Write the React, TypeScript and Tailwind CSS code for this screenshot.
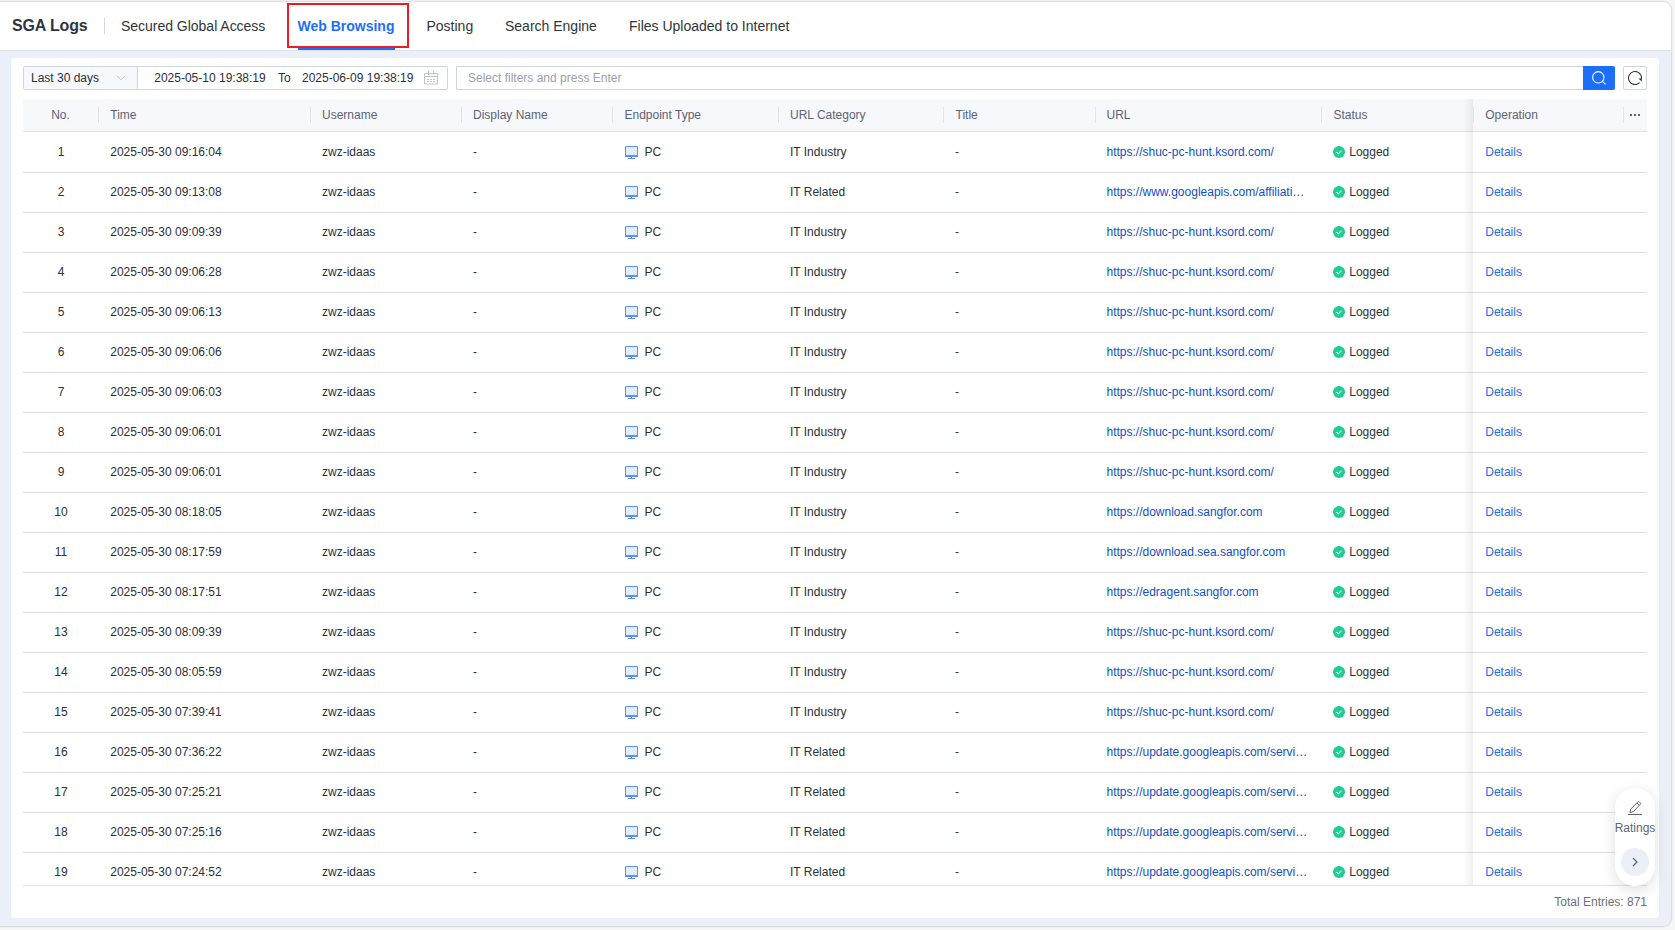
import React from "react";

type Log = { time: string; category: string; url: string };

const HUNT = "https://shuc-pc-hunt.ksord.com/";
const UPDATE = "https://update.googleapis.com/servi…";

const logs: Log[] = [
  { time: "09:16:04", category: "IT Industry", url: HUNT },
  { time: "09:13:08", category: "IT Related", url: "https://www.googleapis.com/affiliati…" },
  { time: "09:09:39", category: "IT Industry", url: HUNT },
  { time: "09:06:28", category: "IT Industry", url: HUNT },
  { time: "09:06:13", category: "IT Industry", url: HUNT },
  { time: "09:06:06", category: "IT Industry", url: HUNT },
  { time: "09:06:03", category: "IT Industry", url: HUNT },
  { time: "09:06:01", category: "IT Industry", url: HUNT },
  { time: "09:06:01", category: "IT Industry", url: HUNT },
  { time: "08:18:05", category: "IT Industry", url: "https://download.sangfor.com" },
  { time: "08:17:59", category: "IT Industry", url: "https://download.sea.sangfor.com" },
  { time: "08:17:51", category: "IT Industry", url: "https://edragent.sangfor.com" },
  { time: "08:09:39", category: "IT Industry", url: HUNT },
  { time: "08:05:59", category: "IT Industry", url: HUNT },
  { time: "07:39:41", category: "IT Industry", url: HUNT },
  { time: "07:36:22", category: "IT Related", url: UPDATE },
  { time: "07:25:21", category: "IT Related", url: UPDATE },
  { time: "07:25:16", category: "IT Related", url: UPDATE },
  { time: "07:24:52", category: "IT Related", url: UPDATE },
];

const headers = [
  { name: "Time", pad: "pl-[11.25px]" },
  { name: "Username", pad: "pl-[11px]" },
  { name: "Display Name", pad: "pl-[11px]" },
  { name: "Endpoint Type", pad: "pl-[11.5px]" },
  { name: "URL Category", pad: "pl-[11px]" },
  { name: "Title", pad: "pl-[11.5px]" },
  { name: "URL", pad: "pl-[10.5px]" },
  { name: "Status", pad: "pl-[11.5px]" },
  { name: "Operation", pad: "pl-[11.25px]" },
];

const columns =
  "grid grid-cols-[76px_212px_151px_151px_166px_165px_152px_226px_152px_150px_23px] items-center";

function MonitorIcon() {
  return (
    <svg width="13" height="13" viewBox="0 0 13 13" className="mt-px shrink-0">
      <rect x="0.5" y="0.5" width="12" height="10" rx="0.5" fill="#e6edff" stroke="#5b8ff9" />
      <path d="M0 9h13v2H0zM6 11h1v1H6zM3 12h7v1H3z" fill="#5b8ff9" />
    </svg>
  );
}

function CheckIcon() {
  return (
    <svg width="12" height="12" viewBox="0 0 12 12" className="shrink-0">
      <circle cx="6" cy="6" r="6" fill="#1fcc94" />
      <path d="M3.5 6.1 5.3 7.8 8.5 4.6" fill="none" stroke="#fff" strokeWidth="1.1" />
    </svg>
  );
}

function CalendarIcon() {
  return (
    <svg width="14" height="14" viewBox="0 0 14 14" fill="none" stroke="#c0c4cc">
      <path d="M0.5 2.5h13v10.5h-13zM0.5 5.5h13M4.5 0v4M9.5 0v4" />
      <path d="M3 8.5h2M6 8.5h2M9 8.5h2M3 10.5h2M6 10.5h2M9 10.5h2" />
    </svg>
  );
}

function TabBar() {
  return (
    <header className="flex h-[49px] shrink-0 items-center border-b border-[#dfe1e8] bg-white pl-3 text-sm text-[#2f3540]">
      <h1 className="w-[92px] text-base font-bold tracking-[-0.15px]">SGA Logs</h1>
      <div className="h-4 w-px bg-[#d3d6de]" />
      <nav className="flex h-full items-center pl-4">
        <a className="w-[177px] tracking-[-0.02px]">Secured Global Access</a>
        <div className="relative flex h-full w-[128.5px] items-center">
          <a className="-ml-[0.5px] font-bold text-[#1c6eff]">Web Browsing</a>
          <span className="absolute bottom-0 left-0 h-0.5 w-[97px] bg-[#1c6eff]" />
          <span className="absolute -left-[11px] top-px h-[45px] w-[122px] border-2 border-[#ed1c24]" />
        </div>
        <a className="w-[78.5px]">Posting</a>
        <a className="w-[124px]">Search Engine</a>
        <a>Files Uploaded to Internet</a>
      </nav>
    </header>
  );
}

function FilterBar() {
  return (
    <div className="flex h-6 shrink-0">
      <div className="flex w-[425px] rounded-[2px] border border-[#d0d4de]">
        <div className="flex w-[114px] items-center justify-between border-r border-[#d0d4de] bg-[#f7f8fc] pl-[7px] pr-[11px]">
          <span>Last 30 days</span>
          <svg width="10" height="6" viewBox="0 0 10 6" fill="none" stroke="#c0c4cc">
            <path d="m1 .8 4 4 4-4" />
          </svg>
        </div>
        <div className="flex flex-1 items-center pl-[16.25px]">
          <span className="w-[123.75px]">2025-05-10 19:38:19</span>
          <span className="w-6">To</span>
          <span className="w-[122px]">2025-06-09 19:38:19</span>
          <CalendarIcon />
        </div>
      </div>
      <div className="ml-2 flex flex-1">
        <div className="flex flex-1 items-center rounded-l-[2px] border border-r-0 border-[#d0d4de] pl-[11px] text-[#9a9fad]">
          Select filters and press Enter
        </div>
        <button className="flex w-8 items-center justify-center rounded-r-[2px] bg-[#1c6eff]">
          <svg width="14" height="14" viewBox="0 0 14 14" fill="none" stroke="#fff" strokeWidth="1.1">
            <circle cx="6.3" cy="6.3" r="5.7" />
            <path d="m10.4 10.4 3.2 3" />
          </svg>
        </button>
      </div>
      <button className="ml-2 flex w-6 items-center justify-center rounded-[2px] border border-[#d0d4de]">
        <svg width="14" height="14" viewBox="0 0 14 14" fill="none" stroke="#2f3540" strokeWidth="1.1">
          <path d="M11.6 11.6A6.5 6.5 0 1 1 13.4 8.2" />
          <path d="M10.4 7.6h3.4v2.9z" fill="#2f3540" stroke="none" />
        </svg>
      </button>
    </div>
  );
}

function LogTable() {
  return (
    <div className="relative mt-[9px] h-[787px] overflow-hidden border-b border-[#dfe1e8]">
      <div className={`${columns} h-[33px] border-b border-[#dfe1e8] bg-[#f7f8fc] text-[#5d6476]`}>
        <div className="flex h-4 items-center justify-center border-r border-[#e2e4eb]">No.</div>
        {headers.map(({ name, pad }) => (
          <div key={name} className={`flex h-4 items-center border-r border-[#e2e4eb] ${pad}`}>
            {name}
          </div>
        ))}
        <div className="flex justify-center gap-0.5 pr-0.5">
          <i className="size-0.5 bg-[#5d6476]" />
          <i className="size-0.5 bg-[#5d6476]" />
          <i className="size-0.5 bg-[#5d6476]" />
        </div>
      </div>
      {logs.map((log, i) => (
        <div
          key={i}
          className={`${columns} border-b border-[#dfe1e8] whitespace-nowrap ${i === 0 ? "h-[41px]" : "h-10 pb-px"}`}
        >
          <div className="text-center">{i + 1}</div>
          <div className="pl-[11.25px]">2025-05-30 {log.time}</div>
          <div className="pl-[11px]">zwz-idaas</div>
          <div className="pl-[11px]">-</div>
          <div className="flex items-center gap-[6.5px] pl-3">
            <MonitorIcon />
            PC
          </div>
          <div className="pl-[11px]">{log.category}</div>
          <div className="pl-[11px]">-</div>
          <div className="pl-[10.5px] text-[#0f4fd1]">{log.url}</div>
          <div className="flex items-center gap-1 pl-[11.25px]">
            <CheckIcon />
            Logged
          </div>
          <div className="pl-[11.25px] text-[#1c6eff]">Details</div>
        </div>
      ))}
      <div className="absolute top-0 left-[1440px] h-full w-[10px] bg-linear-to-r from-black/0 to-black/6" />
    </div>
  );
}

function RatingsWidget() {
  return (
    <aside className="absolute top-[788px] left-[1615px] flex h-[98px] w-10 flex-col items-center rounded-full bg-white text-[#5d6476] shadow-[0_4px_16px_rgba(0,0,0,0.13)]">
      <svg width="14" height="14" viewBox="0 0 14 14" fill="none" stroke="#5d6476" className="mt-[13px]">
        <path d="M0 13.5h14" />
        <path d="m2 11.6.8-3.6L9.9.9q.7-.6 1.4 0l1 1q.6.7 0 1.4L5.4 10.6zM9 2l2.3 2.3" />
      </svg>
      <span className="mt-1 leading-[18px]">Ratings</span>
      <button className="mt-[11px] flex size-7 items-center justify-center rounded-full bg-[#ebeff7]">
        <svg width="6" height="10" viewBox="0 0 6 10" fill="none" stroke="#5d6476" strokeWidth="1.2">
          <path d="m1 1 4 4-4 4" />
        </svg>
      </button>
    </aside>
  );
}

export default function App() {
  return (
    <div className="relative h-[930px] w-[1675px] overflow-hidden bg-[#f7f7f7] pt-0.5 font-['Liberation_Sans',Arial,sans-serif] text-xs text-[#2b303b]">
      <div className="flex h-[924px] w-[1671px] flex-col overflow-hidden rounded-r-lg bg-[#ebeff7] shadow-[0_0_2px_1px_rgba(0,0,0,0.13)]">
        <TabBar />
        <main className="mt-[7px] ml-[11px] flex h-[860px] w-[1648px] flex-col rounded bg-white px-3 pt-2">
          <FilterBar />
          <LogTable />
          <footer className="pt-2 text-right text-[#6b7180]">Total Entries: 871</footer>
        </main>
      </div>
      <RatingsWidget />
    </div>
  );
}
